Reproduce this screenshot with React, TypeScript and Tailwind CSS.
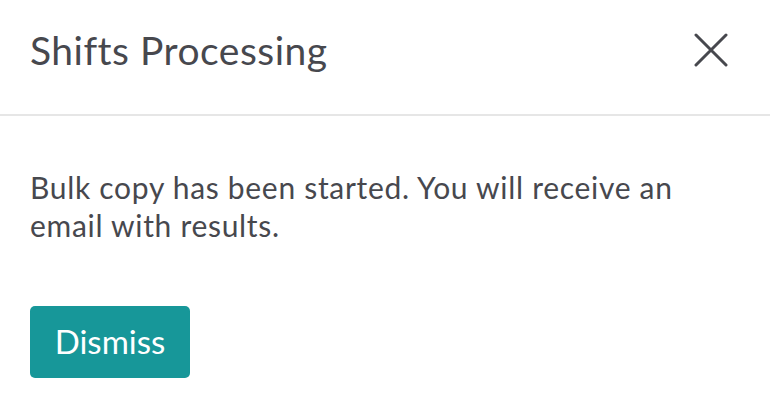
export default function App() {
  return (
    <div className="w-[770px] h-[416px] bg-white text-[#47484e]" style={{ fontFamily: "Lato, 'Open Sans', sans-serif" }}>
      <div className="h-[116px] flex items-center justify-between pl-[30px] pr-[42px] border-b-2 border-[#e6e6e6]">
        <h1 className="text-[39px] leading-none tracking-[0.5px] mt-[-14px]">Shifts Processing</h1>
        <button className="mt-[-14px]" aria-label="Close">
          <svg width="34" height="34" viewBox="0 0 34 34" fill="none" stroke="#47484e" strokeWidth="3" strokeLinecap="round">
            <path d="M2 2 L32 32 M32 2 L2 32" />
          </svg>
        </button>
      </div>
      <div className="pl-[30px] pr-[60px] pt-[52px]">
        <p className="text-[30px] leading-[38px] tracking-[0.7px]">Bulk copy has been started. You will receive an email with results.</p>
        <button className="mt-[62px] w-[160px] h-[72px] rounded-[5px] bg-[#179799] text-white text-[33px]">Dismiss</button>
      </div>
    </div>
  );
}
